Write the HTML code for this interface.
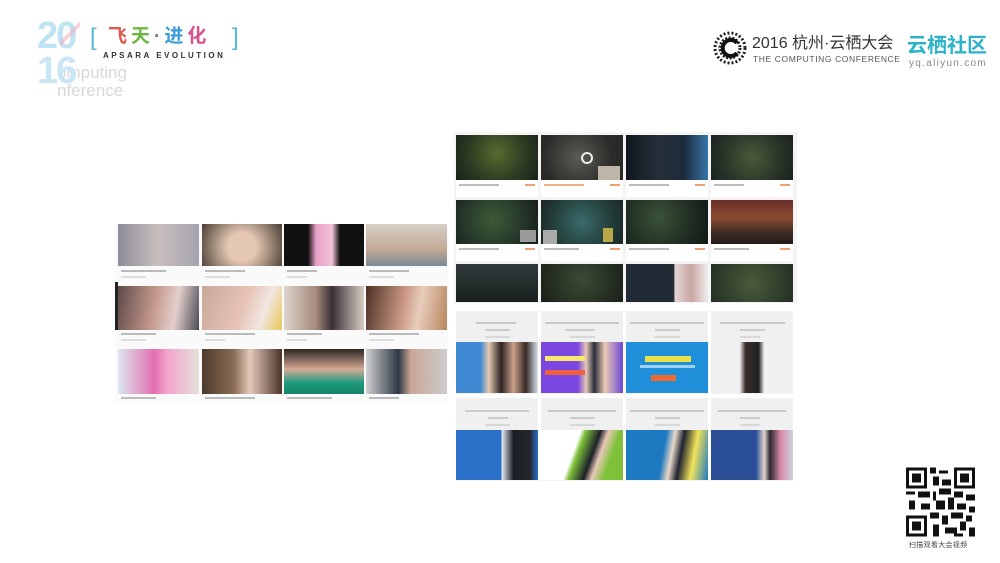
<!DOCTYPE html>
<html><head><meta charset="utf-8"><style>
*{margin:0;padding:0;box-sizing:border-box}
body{width:1000px;height:563px;background:#fff;position:relative;overflow:hidden;font-family:"Liberation Sans","Noto Sans CJK SC",sans-serif}
.a{position:absolute}
.cap{position:absolute;height:2px;background:#bbb}
.or{position:absolute;height:2px;width:10px;background:#f0a070}
</style></head><body>

<!-- header left -->
<div class="a" style="left:57px;top:64px;font-size:17px;color:#d8d8d8;line-height:18px">omputing<br>nference</div>
<div class="a" style="left:37px;top:20px;font-size:38px;font-weight:bold;color:#bfe3f2;letter-spacing:-2px;line-height:32px;">20</div>
<div class="a" style="left:37px;top:55px;font-size:38px;font-weight:bold;color:#c9e6f4;letter-spacing:-2px;line-height:32px;">16</div>
<div class="a" style="left:60px;top:22px;width:20px;height:24px;background:linear-gradient(135deg,transparent 40%,#f2a7b8 50%,transparent 60%);opacity:.7"></div>
<div class="a" style="left:90px;top:26px;font-size:24px;color:#5ab7d8;line-height:24px">[</div>
<div class="a" style="left:232px;top:26px;font-size:24px;color:#5ab7d8;line-height:24px">]</div>
<div class="a" style="left:108px;top:26px;font-size:19px;font-weight:bold;letter-spacing:4px;line-height:22px"><span style="color:#e0584c">飞</span><span style="color:#6cb843">天</span><span style="color:#777">·</span><span style="color:#3a9bd6">进</span><span style="color:#d9528e">化</span></div>
<div class="a" style="left:103px;top:51px;font-size:8px;font-weight:bold;letter-spacing:2.5px;color:#333">APSARA EVOLUTION</div>

<!-- header right -->
<svg class="a" style="left:713px;top:31px" width="34" height="34" viewBox="0 0 34 34">
<g fill="#222"><circle cx="17" cy="17" r="15" fill="none" stroke="#222" stroke-width="3" stroke-dasharray="2 2"/><circle cx="17" cy="17" r="10" fill="none" stroke="#222" stroke-width="3" stroke-dasharray="2 1.5"/><path d="M24 12 A8 8 0 1 0 24 22" fill="none" stroke="#111" stroke-width="4"/></g></svg>
<div class="a" style="left:752px;top:34px;font-size:16px;color:#333;line-height:20px;white-space:nowrap">2016 杭州·云栖大会</div>
<div class="a" style="left:753px;top:54px;font-size:8.5px;color:#555;letter-spacing:.6px">THE COMPUTING CONFERENCE</div>
<div class="a" style="left:907px;top:34px;font-size:20px;color:#2ab3c9;line-height:24px;font-weight:bold;white-space:nowrap">云栖社区</div>
<div class="a" style="left:909px;top:58px;font-size:10px;color:#888;letter-spacing:1.3px">yq.aliyun.com</div>

<!-- left grid -->
<div class="a" style="left:115px;top:224px;width:333px;height:179px;background:#fafafa"></div>
<div class="a" style="left:115px;top:282px;width:3px;height:48px;background:#222"></div>
<div class="a" style="left:118px;top:224px;width:81px;height:42px;background:linear-gradient(90deg,#8f8d99,#c8bfbf 50%,#a5a2ad)"></div>
<div class="a" style="left:202px;top:224px;width:80px;height:42px;background:radial-gradient(circle at 50% 55%,#e6c9b5 30%,#8c7a6a 70%,#4a3e36)"></div>
<div class="a" style="left:284px;top:224px;width:80px;height:42px;background:linear-gradient(90deg,#111 0 30%,#e7a0c6 40%,#f2c2d6 60%,#111 70%)"></div>
<div class="a" style="left:366px;top:224px;width:81px;height:42px;background:linear-gradient(180deg,#d7cfc8,#c2a994 60%,#7b8994)"></div>
<div class="a" style="left:118px;top:286px;width:81px;height:44px;background:linear-gradient(100deg,#5e4a48,#c69a8e 45%,#e3cfcc 70%,#4b4c55)"></div>
<div class="a" style="left:202px;top:286px;width:80px;height:44px;background:linear-gradient(110deg,#c8a89a,#e6c3b5 50%,#f1e6e1 75%,#e8c85a)"></div>
<div class="a" style="left:284px;top:286px;width:80px;height:44px;background:linear-gradient(90deg,#ddd4cc,#a58a7c 40%,#3a3037 60%,#d7ccc3)"></div>
<div class="a" style="left:366px;top:286px;width:81px;height:44px;background:linear-gradient(100deg,#4b3125,#c99682 45%,#e8cdbc 65%,#b8865e)"></div>
<div class="a" style="left:118px;top:349px;width:81px;height:45px;background:linear-gradient(90deg,#dbe6ee,#e36fb0 45%,#f2a3ca 60%,#e6e1dc)"></div>
<div class="a" style="left:202px;top:349px;width:80px;height:45px;background:linear-gradient(90deg,#4c3a2b,#8a6d55 40%,#e4c8ba 60%,#4a3428)"></div>
<div class="a" style="left:284px;top:349px;width:80px;height:45px;background:linear-gradient(180deg,#2d2620,#d4a996 45%,#1f9a7e 75%,#138367)"></div>
<div class="a" style="left:366px;top:349px;width:81px;height:45px;background:linear-gradient(90deg,#d0d0d0,#2d3845 40%,#c9a597 55%,#ccc)"></div>
<div class="cap" style="left:121px;top:270px;width:45px"></div><div class="cap" style="left:205px;top:270px;width:40px"></div><div class="cap" style="left:287px;top:270px;width:30px"></div><div class="cap" style="left:369px;top:270px;width:40px"></div>
<div class="cap" style="left:121px;top:276px;width:25px;background:#ddd"></div><div class="cap" style="left:205px;top:276px;width:25px;background:#ddd"></div><div class="cap" style="left:287px;top:276px;width:20px;background:#ddd"></div><div class="cap" style="left:369px;top:276px;width:25px;background:#ddd"></div>
<div class="cap" style="left:121px;top:333px;width:35px"></div><div class="cap" style="left:205px;top:333px;width:50px"></div><div class="cap" style="left:287px;top:333px;width:35px"></div><div class="cap" style="left:369px;top:333px;width:50px"></div>
<div class="cap" style="left:121px;top:339px;width:25px;background:#ddd"></div><div class="cap" style="left:205px;top:339px;width:20px;background:#ddd"></div><div class="cap" style="left:287px;top:339px;width:20px;background:#ddd"></div><div class="cap" style="left:369px;top:339px;width:25px;background:#ddd"></div>
<div class="cap" style="left:121px;top:397px;width:35px"></div><div class="cap" style="left:205px;top:397px;width:50px"></div><div class="cap" style="left:287px;top:397px;width:45px"></div><div class="cap" style="left:369px;top:397px;width:30px"></div>

<!-- right top grid -->
<div class="a" style="left:454px;top:132px;width:343px;height:171px;background:#f4f4f4"></div>
<div class="a" style="left:456px;top:135px;width:82px;height:45px;background:radial-gradient(circle at 50% 40%,#5a6a2e,#2a3a22 60%,#1a2219)"></div>
<div class="a" style="left:541px;top:135px;width:82px;height:45px;background:radial-gradient(circle at 45% 50%,#5a5a56,#2a2a28 70%)"></div>
<div class="a" style="left:581px;top:152px;width:12px;height:12px;border:2px solid #eee;border-radius:50%"></div>
<div class="a" style="left:598px;top:166px;width:22px;height:14px;background:#bdb6a8"></div>
<div class="a" style="left:626px;top:135px;width:82px;height:45px;background:linear-gradient(90deg,#11161e,#26303a 40%,#1c2a3a 70%,#3875a8)"></div>
<div class="a" style="left:711px;top:135px;width:82px;height:45px;background:radial-gradient(circle at 50% 50%,#4a5a3a,#2a3528 60%,#1b2220)"></div>
<div class="a" style="left:456px;top:200px;width:82px;height:44px;background:radial-gradient(circle at 45% 45%,#3d5a35,#24362a 60%,#141c18)"></div>
<div class="a" style="left:520px;top:230px;width:16px;height:12px;background:#9a9a98"></div>
<div class="a" style="left:541px;top:200px;width:82px;height:44px;background:radial-gradient(circle at 50% 50%,#3a6a6a,#24403c 60%,#1a2624)"></div>
<div class="a" style="left:543px;top:230px;width:14px;height:14px;background:#aaa"></div><div class="a" style="left:603px;top:228px;width:10px;height:14px;background:#b8a84a"></div>
<div class="a" style="left:626px;top:200px;width:82px;height:44px;background:radial-gradient(circle at 40% 40%,#3b5238,#1f2d22 60%,#111814)"></div>
<div class="a" style="left:711px;top:200px;width:82px;height:44px;background:linear-gradient(180deg,#6a2e2a,#8a4a30 40%,#3a2a22 75%,#261a18)"></div>
<div class="a" style="left:456px;top:264px;width:82px;height:38px;background:linear-gradient(180deg,#303a3a,#1a2020)"></div>
<div class="a" style="left:541px;top:264px;width:82px;height:38px;background:radial-gradient(circle at 50% 40%,#3a4a34,#1a2018)"></div>
<div class="a" style="left:626px;top:264px;width:82px;height:38px;background:linear-gradient(90deg,#222a35 0 58%,#e2d4d4 60%,#c9a7a3 80%,#eee)"></div>
<div class="a" style="left:711px;top:264px;width:82px;height:38px;background:radial-gradient(circle at 50% 50%,#4a5a3a,#233024)"></div>
<div class="a" style="left:456px;top:180px;width:82px;height:17px;background:#fff"></div><div class="a" style="left:541px;top:180px;width:82px;height:17px;background:#fff"></div><div class="a" style="left:626px;top:180px;width:82px;height:17px;background:#fff"></div><div class="a" style="left:711px;top:180px;width:82px;height:17px;background:#fff"></div>
<div class="a" style="left:456px;top:244px;width:82px;height:17px;background:#fff"></div><div class="a" style="left:541px;top:244px;width:82px;height:17px;background:#fff"></div><div class="a" style="left:626px;top:244px;width:82px;height:17px;background:#fff"></div><div class="a" style="left:711px;top:244px;width:82px;height:17px;background:#fff"></div>
<div class="cap" style="left:459px;top:184px;width:40px"></div><div class="cap" style="left:544px;top:184px;width:40px;background:#f1b08a"></div><div class="cap" style="left:629px;top:184px;width:40px"></div><div class="cap" style="left:714px;top:184px;width:30px"></div>
<div class="cap" style="left:459px;top:248px;width:40px"></div><div class="cap" style="left:544px;top:248px;width:35px"></div><div class="cap" style="left:629px;top:248px;width:40px"></div><div class="cap" style="left:714px;top:248px;width:35px"></div>
<div class="or" style="left:525px;top:184px"></div><div class="or" style="left:610px;top:184px"></div><div class="or" style="left:695px;top:184px"></div><div class="or" style="left:780px;top:184px"></div>
<div class="or" style="left:525px;top:248px"></div><div class="or" style="left:610px;top:248px"></div><div class="or" style="left:695px;top:248px"></div><div class="or" style="left:780px;top:248px"></div>

<!-- right bottom grid -->
<div class="a" style="left:456px;top:311px;width:82px;height:83px;background:#f0f0f0"></div>
<div class="a" style="left:541px;top:311px;width:82px;height:83px;background:#f0f0f0"></div>
<div class="a" style="left:626px;top:311px;width:82px;height:83px;background:#f0f0f0"></div>
<div class="a" style="left:711px;top:311px;width:82px;height:83px;background:#f0f0f0"></div>
<div class="a" style="left:456px;top:398px;width:82px;height:83px;background:#f0f0f0"></div>
<div class="a" style="left:541px;top:398px;width:82px;height:83px;background:#f0f0f0"></div>
<div class="a" style="left:626px;top:398px;width:82px;height:83px;background:#f0f0f0"></div>
<div class="a" style="left:711px;top:398px;width:82px;height:83px;background:#f0f0f0"></div>
<div class="cap" style="left:476px;top:322px;width:40px;background:#c8c8c8"></div><div class="cap" style="left:545px;top:322px;width:74px;background:#c8c8c8"></div><div class="cap" style="left:630px;top:322px;width:74px;background:#c8c8c8"></div><div class="cap" style="left:720px;top:322px;width:65px;background:#c8c8c8"></div>
<div class="cap" style="left:485px;top:329px;width:25px;background:#ccc"></div><div class="cap" style="left:565px;top:329px;width:30px;background:#ccc"></div><div class="cap" style="left:655px;top:329px;width:25px;background:#ccc"></div><div class="cap" style="left:740px;top:329px;width:25px;background:#ccc"></div>
<div class="cap" style="left:485px;top:336px;width:25px;background:#d8d8d8"></div><div class="cap" style="left:570px;top:336px;width:25px;background:#d8d8d8"></div><div class="cap" style="left:655px;top:336px;width:25px;background:#d8d8d8"></div><div class="cap" style="left:740px;top:336px;width:20px;background:#d8d8d8"></div>
<div class="cap" style="left:465px;top:410px;width:64px;background:#ccc"></div><div class="cap" style="left:548px;top:410px;width:68px;background:#c8c8c8"></div><div class="cap" style="left:630px;top:410px;width:74px;background:#c8c8c8"></div><div class="cap" style="left:718px;top:410px;width:68px;background:#c8c8c8"></div>
<div class="cap" style="left:488px;top:417px;width:20px;background:#ccc"></div><div class="cap" style="left:570px;top:417px;width:25px;background:#ccc"></div><div class="cap" style="left:655px;top:417px;width:25px;background:#ccc"></div><div class="cap" style="left:740px;top:417px;width:20px;background:#ccc"></div>
<div class="cap" style="left:485px;top:424px;width:25px;background:#d8d8d8"></div><div class="cap" style="left:570px;top:424px;width:25px;background:#d8d8d8"></div><div class="cap" style="left:655px;top:424px;width:25px;background:#d8d8d8"></div><div class="cap" style="left:740px;top:424px;width:20px;background:#d8d8d8"></div>
<div class="a" style="left:456px;top:342px;width:82px;height:51px;background:linear-gradient(90deg,#3f8ad2 0 30%,#e8c8b0 40%,#2a2424 55%,#c9a08a 70%,#3a2a25 85%,#d9e4ef)"></div>
<div class="a" style="left:541px;top:342px;width:82px;height:51px;background:linear-gradient(90deg,#7a48e0 0 45%,#e6c7b2 55%,#2a2e3e 65%,#eac9b4 78%,#6c48d6)"></div>
<div class="a" style="left:545px;top:356px;width:40px;height:5px;background:#f7e76a"></div><div class="a" style="left:545px;top:370px;width:40px;height:5px;background:#f06040"></div>
<div class="a" style="left:626px;top:342px;width:82px;height:51px;background:#1e8fd8"></div>
<div class="a" style="left:645px;top:356px;width:46px;height:6px;background:#e8e14a"></div><div class="a" style="left:640px;top:365px;width:55px;height:3px;background:#9ed0f0"></div><div class="a" style="left:651px;top:375px;width:25px;height:6px;background:#f06a30"></div>
<div class="a" style="left:711px;top:342px;width:82px;height:51px;background:linear-gradient(90deg,#f0f0f0 35%,#3a2f2a 42%,#1f1f22 58%,#f0f0f0 65%)"></div>
<div class="a" style="left:456px;top:430px;width:82px;height:50px;background:linear-gradient(90deg,#2a70c8 0 55%,#e6eaf2 56%,#1b1d24 70%,#25272d 90%,#2a70c8)"></div>
<div class="a" style="left:541px;top:430px;width:82px;height:50px;background:linear-gradient(110deg,#fff 0 40%,#7fc23a 45%,#1c2028 60%,#e8c8b8 68%,#7fc23a 80%)"></div>
<div class="a" style="left:626px;top:430px;width:82px;height:50px;background:linear-gradient(100deg,#1d7ac0 0 45%,#e8d8c8 55%,#1f2230 65%,#f2e25a 80%,#1d7ac0)"></div>
<div class="a" style="left:711px;top:430px;width:82px;height:50px;background:linear-gradient(90deg,#2a4f96 0 55%,#e4d4cc 65%,#2a2830 72%,#d88aa8 85%,#ccd3e0)"></div>

<!-- QR -->
<svg class="a" style="left:906px;top:467px" width="69" height="70" viewBox="0 0 23 23">
<rect width="23" height="23" fill="#fff"/>
<g fill="#111">
<path d="M0 0h7v7H0zM1 1v5h5V1zM2 2h3v3H2z" fill-rule="evenodd"/>
<path d="M16 0h7v7h-7zM17 1v5h5V1zM18 2h3v3h-3z" fill-rule="evenodd"/>
<path d="M0 16h7v7H0zM1 17v5h5v-5zM2 18h3v3H2z" fill-rule="evenodd"/>
<rect x="8" y="0" width="2" height="2"/><rect x="11" y="1" width="3" height="1"/><rect x="9" y="3" width="2" height="3"/><rect x="12" y="4" width="3" height="2"/>
<rect x="0" y="8" width="3" height="1"/><rect x="4" y="8" width="4" height="2"/><rect x="9" y="8" width="1" height="3"/><rect x="11" y="7" width="4" height="2"/><rect x="16" y="8" width="3" height="2"/><rect x="20" y="9" width="3" height="2"/>
<rect x="1" y="11" width="2" height="3"/><rect x="5" y="12" width="3" height="2"/><rect x="10" y="11" width="3" height="3"/><rect x="14" y="10" width="2" height="4"/><rect x="17" y="12" width="3" height="2"/><rect x="21" y="13" width="2" height="2"/>
<rect x="8" y="15" width="3" height="2"/><rect x="12" y="16" width="2" height="3"/><rect x="15" y="15" width="4" height="2"/><rect x="20" y="16" width="2" height="2"/>
<rect x="9" y="19" width="2" height="4"/><rect x="13" y="20" width="4" height="2"/><rect x="18" y="18" width="2" height="3"/><rect x="21" y="20" width="2" height="3"/><rect x="16" y="22" width="3" height="1"/>
</g></svg>
<div class="a" style="left:909px;top:540px;font-size:7px;color:#444;letter-spacing:.3px">扫描观看大会视频</div>
</body></html>
